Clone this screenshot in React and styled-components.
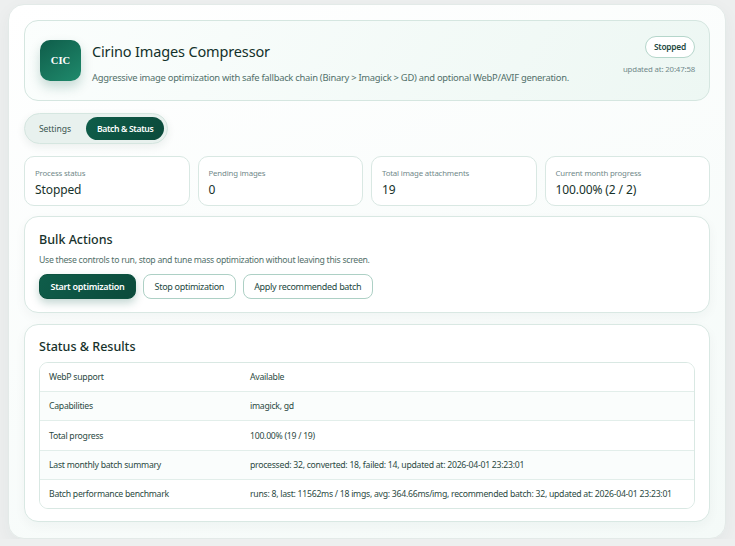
import React from 'react';
import styled, { createGlobalStyle } from 'styled-components';

const GlobalStyle = createGlobalStyle`
  html, body {
    margin: 0;
    padding: 0;
    background: #edefef;
    font-family: "Noto Sans", "Open Sans", sans-serif;
    color: #17322b;
  }
  * { box-sizing: border-box; }
`;

const Shell = styled.div`
  width: 718px;
  height: 535px;
  margin: 4px 0 0 8px;
  padding: 15px;
  border: 1px solid #e3eae8;
  border-radius: 16px;
  background: linear-gradient(160deg, #ffffff 0%, #f4faf8 100%);
  box-shadow: 0 6px 18px rgba(20, 60, 50, 0.05);
`;

const Hero = styled.header`
  display: flex;
  align-items: center;
  justify-content: space-between;
  height: 81px;
  padding: 0 14px 0 15px;
  border: 1px solid #d5e6e0;
  border-radius: 14px;
  background: linear-gradient(120deg, #fbfefd 0%, #edf7f3 100%);
`;

const Brand = styled.div`
  display: flex;
  align-items: center;
  gap: 11px;
`;

const Logo = styled.div`
  display: flex;
  align-items: center;
  justify-content: center;
  width: 41px;
  height: 41px;
  border-radius: 10px;
  background: linear-gradient(145deg, #0f5d4a 0%, #1f8a6c 100%);
  color: #fff;
  font-family: "Liberation Serif", serif;
  font-size: 10.5px;
  font-weight: 700;
  box-shadow: 0 6px 12px rgba(15, 93, 74, 0.22);
`;

const BrandText = styled.div`
  display: flex;
  flex-direction: column;
  gap: 10px;
  margin-top: 4px;
`;

const Title = styled.h1`
  margin: 0;
  font-size: 14.5px;
  line-height: 20px;
  font-weight: 400;
  letter-spacing: -0.15px;
  color: #12312a;
`;

const Subtitle = styled.p`
  margin: 0;
  font-size: 9.4px;
  line-height: 13px;
  letter-spacing: -0.27px;
  color: #52706a;
`;

const HeroStatus = styled.div`
  display: flex;
  flex-direction: column;
  align-items: flex-end;
  gap: 5px;
  margin-top: -11px;
`;

const Badge = styled.span`
  display: flex;
  align-items: center;
  height: 22px;
  padding: 0 8px;
  border: 1px solid #b5d6cb;
  border-radius: 11px;
  background: #fff;
  font-size: 8.4px;
  font-weight: 600;
  letter-spacing: -0.25px;
  color: #24493f;
`;

const Updated = styled.span`
  font-size: 7.8px;
  line-height: 12px;
  letter-spacing: -0.15px;
  color: #71898a;
`;

const Tabs = styled.nav`
  display: flex;
  width: fit-content;
  gap: 4px;
  margin: 12px 0 0;
  padding: 3px;
  height: 31px;
  border: 1px solid #d5e6e0;
  border-radius: 16px;
  background: #e8f1ee;
  box-shadow: 0 3px 8px rgba(20, 60, 50, 0.08);
`;

const Tab = styled.button`
  border: 0;
  height: 23px;
  padding: 0 11px;
  border-radius: 12px;
  font-family: inherit;
  font-size: 8.6px;
  font-weight: ${p => (p.$active ? 600 : 400)};
  letter-spacing: ${p => (p.$active ? '-0.35px' : '-0.1px')};
  color: ${p => (p.$active ? '#fff' : '#3a554e')};
  background: ${p => (p.$active ? 'linear-gradient(120deg, #0f5d4a, #0b4a3b)' : 'transparent')};
`;

const Stats = styled.section`
  display: grid;
  grid-template-columns: repeat(4, 1fr);
  gap: 8px;
  margin-top: 12px;
`;

const StatCard = styled.div`
  height: 50px;
  padding: 10px 10px 0;
  border: 1px solid #d9e8e3;
  border-radius: 10px;
  background: #fff;
`;

const StatLabel = styled.div`
  font-size: 7.8px;
  line-height: 12px;
  letter-spacing: -0.15px;
  color: #71898a;
`;

const StatValue = styled.div`
  margin-top: 3px;
  font-size: 12px;
  line-height: 16px;
  letter-spacing: -0.1px;
  color: #17322b;
`;

const Panel = styled.section`
  margin-top: ${p => p.$gap}px;
  padding: ${p => p.$pad}px 14px 0;
  height: ${p => p.$height}px;
  border: 1px solid #d9e8e3;
  border-radius: 14px;
  background: #fff;
  box-shadow: 0 4px 12px rgba(20, 60, 50, 0.04);
`;

const PanelTitle = styled.h2`
  margin: 0;
  font-size: 12.5px;
  line-height: 17px;
  font-weight: 500;
  color: #17322b;
`;

const PanelText = styled.p`
  margin: 6px 0 0;
  font-size: 8.7px;
  line-height: 12px;
  letter-spacing: -0.28px;
  color: #52706a;
`;

const Actions = styled.div`
  display: flex;
  gap: 7px;
  margin-top: 8px;
`;

const ActionButton = styled.button`
  height: 25px;
  padding: 0 10.5px;
  border-radius: 8px;
  font-family: inherit;
  font-size: 9px;
  letter-spacing: -0.3px;
  font-weight: ${p => (p.$primary ? 600 : 400)};
  border: 1px solid ${p => (p.$primary ? '#0d5240' : '#add0c5')};
  color: ${p => (p.$primary ? '#fff' : '#24493f')};
  background: ${p => (p.$primary ? 'linear-gradient(120deg, #0f5d4a, #0b4a3b)' : '#fff')};
  box-shadow: ${p => (p.$primary ? '0 4px 9px rgba(15, 93, 74, 0.25)' : 'none')};
`;

const ResultTable = styled.div`
  margin-top: 7px;
  border: 1px solid #d9e8e3;
  border-radius: 9px;
  overflow: hidden;
`;

const ResultRow = styled.div`
  display: grid;
  grid-template-columns: 201px 1fr;
  align-items: center;
  height: ${p => p.$height}px;
  padding: 0 9px;
  font-size: 8.7px;
  letter-spacing: -0.27px;
  white-space: nowrap;
  color: #2c4a43;
  background: ${p => (p.$odd ? '#fafdfc' : '#fff')};
  border-top: ${p => (p.$first ? '0' : '1px solid #e2eeea')};
`;

const stats = [
  ['Process status', 'Stopped'],
  ['Pending images', '0'],
  ['Total image attachments', '19'],
  ['Current month progress', '100.00% (2 / 2)'],
];

const rows = [
  ['WebP support', 'Available', 28],
  ['Capabilities', 'imagick, gd', 29],
  ['Total progress', '100.00% (19 / 19)', 30],
  ['Last monthly batch summary', 'processed: 32, converted: 18, failed: 14, updated at: 2026-04-01 23:23:01', 29],
  ['Batch performance benchmark', 'runs: 8, last: 11562ms / 18 imgs, avg: 364.66ms/img, recommended batch: 32, updated at: 2026-04-01 23:23:01', 29],
];

const App = () => (
  <Shell>
    <GlobalStyle />
    <Hero>
      <Brand>
        <Logo>CIC</Logo>
        <BrandText>
          <Title>Cirino Images Compressor</Title>
          <Subtitle>Aggressive image optimization with safe fallback chain (Binary &gt; Imagick &gt; GD) and optional WebP/AVIF generation.</Subtitle>
        </BrandText>
      </Brand>
      <HeroStatus>
        <Badge>Stopped</Badge>
        <Updated>updated at: 20:47:58</Updated>
      </HeroStatus>
    </Hero>
    <Tabs>
      <Tab>Settings</Tab>
      <Tab $active>Batch &amp; Status</Tab>
    </Tabs>
    <Stats>
      {stats.map(([label, value]) => (
        <StatCard key={label}>
          <StatLabel>{label}</StatLabel>
          <StatValue>{value}</StatValue>
        </StatCard>
      ))}
    </Stats>
    <Panel $gap={10} $height={97} $pad={14}>
      <PanelTitle>Bulk Actions</PanelTitle>
      <PanelText>Use these controls to run, stop and tune mass optimization without leaving this screen.</PanelText>
      <Actions>
        <ActionButton $primary>Start optimization</ActionButton>
        <ActionButton>Stop optimization</ActionButton>
        <ActionButton>Apply recommended batch</ActionButton>
      </Actions>
    </Panel>
    <Panel $gap={11} $height={198} $pad={13}>
      <PanelTitle>Status &amp; Results</PanelTitle>
      <ResultTable>
        {rows.map(([label, value, height], i) => (
          <ResultRow key={label} $first={i === 0} $odd={i % 2 === 1} $height={height}>
            <span>{label}</span>
            <span>{value}</span>
          </ResultRow>
        ))}
      </ResultTable>
    </Panel>
  </Shell>
);

export default App;
